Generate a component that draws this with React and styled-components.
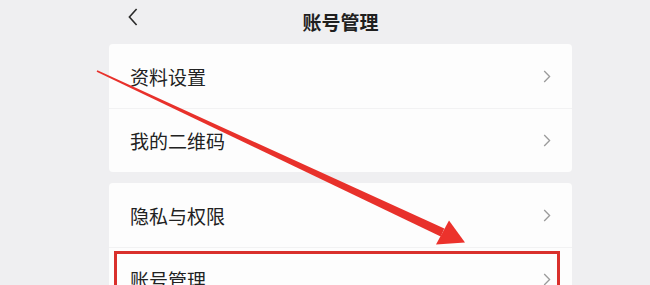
import React from "react";
import styled, { createGlobalStyle } from "styled-components";

const Global = createGlobalStyle`
  html, body { margin: 0; padding: 0; background: #efeff1; }
  body { font-family: "Noto Sans CJK SC", "Noto Sans", sans-serif; }
`;

const Screen = styled.div`
  position: relative;
  width: 650px;
  height: 285px;
  overflow: hidden;
  background: #efeff1;
`;

const Column = styled.div`
  margin-left: 109px;
  width: 463px;
  display: flex;
  flex-direction: column;
`;

const Header = styled.div`
  position: relative;
  height: 44px;
  display: flex;
  align-items: center;
  justify-content: center;
`;

const BackButton = styled.div`
  position: absolute;
  left: 19px;
  top: 8px;
  width: 10px;
  height: 18px;
  display: flex;
`;

const Title = styled.div`
  font-size: 19px;
  font-weight: 700;
  color: #1f1f1f;
  line-height: 1;
  margin-top: -2px;
`;

const Card = styled.div`
  background: #fdfdfd;
  border-radius: 4px;
  margin-bottom: ${(p) => p.$gap || 0}px;
  display: flex;
  flex-direction: column;
`;

const Row = styled.div`
  position: relative;
  height: 64px;
  display: flex;
  align-items: center;
  justify-content: space-between;
  padding: 0 21px;
  border-top: ${(p) => (p.$divider ? "1px solid #f2f2f3" : "none")};
  box-sizing: border-box;
`;

const Label = styled.span`
  font-size: 19px;
  color: #222;
  line-height: 1;
`;

const Highlight = styled.div`
  position: absolute;
  top: 3px;
  left: 5px;
  right: 12px;
  height: 70px;
  border: 3px solid #d9302c;
  box-sizing: border-box;
  pointer-events: none;
`;

const Overlay = styled.svg`
  position: absolute;
  left: 0;
  top: 0;
  pointer-events: none;
`;

const Chevron = () => (
  <svg width="8" height="13" viewBox="0 0 8 13">
    <path d="M1.2 1 L6.6 6.5 L1.2 12" fill="none" stroke="#9b9b9b" strokeWidth="1.3" />
  </svg>
);

const items = [
  [{ t: "资料设置" }, { t: "我的二维码" }],
  [{ t: "隐私与权限" }, { t: "账号管理", hl: true }],
];

// arrow shaft: tapered from start to head base
const sx = 97, sy = 71, ex = 442.5, ey = 232.5;
const dx = ex - sx, dy = ey - sy;
const len = Math.hypot(dx, dy);
const nx = -dy / len, ny = dx / len;
const w0 = 0.8, w1 = 4.3;
const shaft = [
  [sx + nx * w0, sy + ny * w0],
  [ex + nx * w1, ey + ny * w1],
  [ex - nx * w1, ey - ny * w1],
  [sx - nx * w0, sy - ny * w0],
]
  .map((p) => p.map((v) => v.toFixed(2)).join(","))
  .join(" ");

export default function App() {
  return (
    <Screen>
      <Global />
      <Column>
        <Header>
          <BackButton>
            <svg width="10" height="18" viewBox="0 0 10 18">
              <path d="M8.6 1 L1.4 9 L8.6 17" fill="none" stroke="#2a2a2a" strokeWidth="1.6" />
            </svg>
          </BackButton>
          <Title>账号管理</Title>
        </Header>
        {items.map((group, gi) => (
          <Card key={gi} $gap={gi === 0 ? 11 : 0}>
            {group.map((it, i) => (
              <Row key={it.t} $divider={i > 0}>
                <Label>{it.t}</Label>
                <Chevron />
                {it.hl && <Highlight />}
              </Row>
            ))}
          </Card>
        ))}
      </Column>
      <Overlay width="650" height="285" viewBox="0 0 650 285">
        <polygon points={shaft} fill="#e8312b" />
        <polygon points="436,244.5 449,220.5 465,242.5" fill="#ec322c" />
      </Overlay>
    </Screen>
  );
}
